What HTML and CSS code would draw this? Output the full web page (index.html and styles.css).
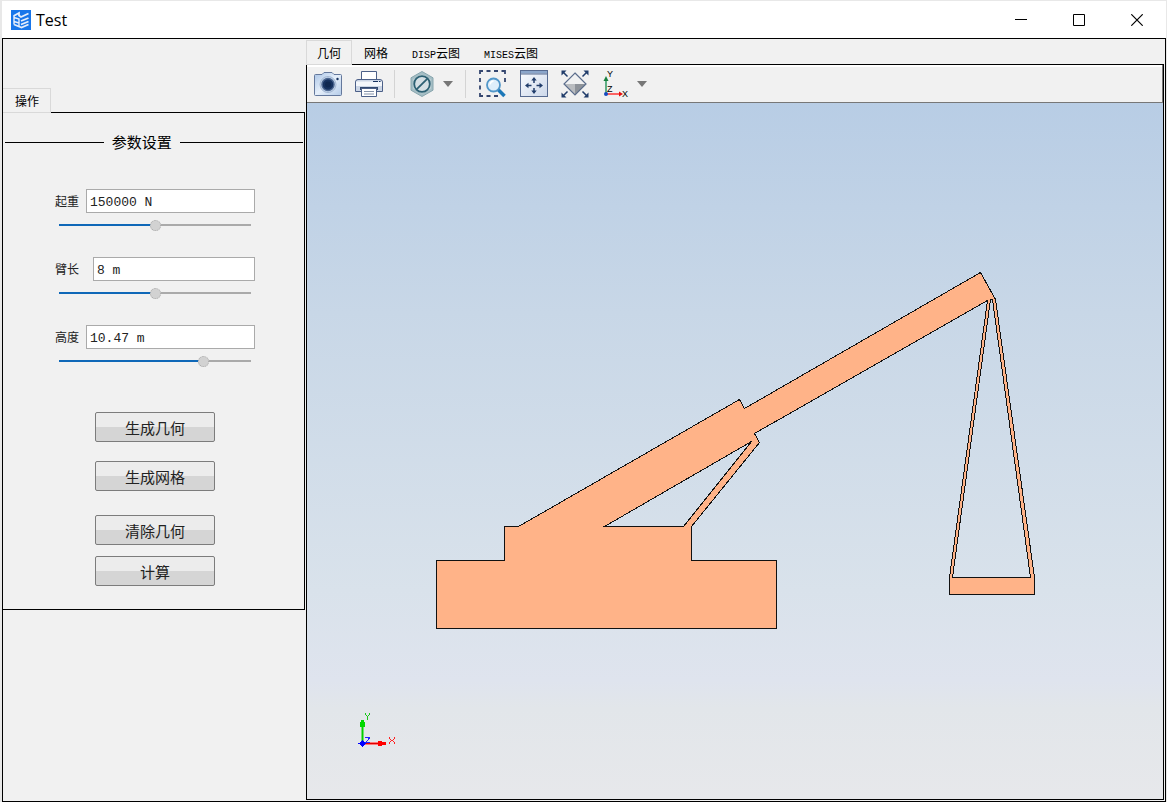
FILE: index.html
```
<!DOCTYPE html>
<html lang="zh-CN">
<head>
<meta charset="utf-8">
<title>Test</title>
<link rel="stylesheet" href="styles.css">
</head>
<body>
<div class="window">
  <header class="titlebar">
    <svg class="logo" width="20" height="20" viewBox="0 0 20 20" aria-hidden="true">
      <rect width="20" height="20" fill="#1876ea"/>
      <g fill="none" stroke="#e6eefb">
        <path d="M2.500 6 8 3v2.500L10 7l7.500-3.500M10 11l7.500-3M10 14.500l7.500-3M3 14.500l7.500 3 7-3" stroke-width="1.800"/>
        <path d="M3 6v8.500M3 7.500l5 1.500v7M3 11.500l5 1.500" stroke-width="1.400"/>
      </g>
    </svg>
    <h1 class="title">Test</h1>
    <button class="win-btn" aria-label="最小化"><svg width="12" height="12" viewBox="0 0 12 12"><path d="M0 5.500h12" fill="none" stroke="#000"/></svg></button>
    <button class="win-btn" aria-label="最大化"><svg width="12" height="12" viewBox="0 0 12 12"><path d="M.5.5h11v11H.5z" fill="none" stroke="#000"/></svg></button>
    <button class="win-btn" aria-label="关闭"><svg width="12" height="12" viewBox="0 0 12 12"><path d="M.3.3l11.400 11.400M11.700.3.3 11.700" fill="none" stroke="#000" stroke-width="1.200"/></svg></button>
  </header>

  <div class="content">
    <aside class="sidebar">
      <div class="tabs" role="tablist">
        <button class="tab tab-active" role="tab" aria-selected="true">操作</button>
        <span class="tab-line"></span>
      </div>
      <section class="panel">
        <h2 class="panel-title">参数设置</h2>
        <form class="params">
          <div class="param">
            <label for="load">起重</label>
            <input class="field" id="load" type="text" value="150000 N">
            <input class="slider half" type="range" min="0" max="100" value="50" aria-label="起重滑块">
          </div>
          <div class="param param-narrow">
            <label for="arm">臂长</label>
            <input class="field" id="arm" type="text" value="8 m">
            <input class="slider half" type="range" min="0" max="100" value="50" aria-label="臂长滑块">
          </div>
          <div class="param">
            <label for="height">高度</label>
            <input class="field" id="height" type="text" value="10.47 m">
            <input class="slider high" type="range" min="0" max="100" value="77" aria-label="高度滑块">
          </div>
        </form>
        <div class="actions">
          <button class="action">生成几何</button>
          <button class="action mesh">生成网格</button>
          <button class="action clear">清除几何</button>
          <button class="action compute">计算</button>
        </div>
      </section>
    </aside>

    <main class="main">
      <div class="tabs" role="tablist">
        <button class="tab tab-active" role="tab" aria-selected="true">几何</button>
        <button class="tab" role="tab">网格</button>
        <button class="tab" role="tab"><span class="latin">DISP</span>云图</button>
        <button class="tab" role="tab"><span class="latin">MISES</span>云图</button>
        <span class="tab-line"></span>
      </div>
      <div class="view">
        <div class="toolbar" role="toolbar">
          <button class="tool" aria-label="截图">
            <svg width="28" height="28" viewBox="0 0 28 28">
              <defs><linearGradient id="cam" x2="1" y2="1"><stop offset="0" stop-color="#a9c4e6"/><stop offset=".5" stop-color="#e6effa"/><stop offset="1" stop-color="#b4cbe8"/></linearGradient></defs>
              <path d="M1.500 4.500H8l2-2h8l2 2h6.500q1 0 1 1v19q0 1-1 1h-25q-1 0-1-1v-19q0-1 1-1z" fill="url(#cam)" stroke="#64789c"/>
              <circle cx="14" cy="14.500" r="8" fill="#c6d7ec" stroke="#a2b6d2"/>
              <circle cx="14" cy="14.500" r="6" fill="#16325f" stroke="#4d6790" stroke-width="1.500"/>
              <circle cx="14" cy="14.500" r="3" fill="#0f2850"/>
              <circle cx="23.500" cy="9" r="1.200" fill="#16325f"/>
            </svg>
          </button>
          <button class="tool" aria-label="打印">
            <svg width="28" height="28" viewBox="0 0 28 28">
              <path d="M6.500 10V1.500h15V10" fill="#fff" stroke="#4c6088"/>
              <path d="M3 9.500h22q2.500 0 2.500 2.500v9.500H.5V12Q.5 9.500 3 9.500z" fill="#ccd6e6" stroke="#4c6088"/>
              <path d="M1 11.500h26V16H1z" fill="#f4f7fb"/>
              <path d="M5 17h18v3H5z" fill="#32496f"/>
              <path d="M6.500 18.500h15v8h-15z" fill="#fff" stroke="#4c6088"/>
              <path d="M9 21.500h10M9 24h10" stroke="#8493aa"/>
              <path d="M18 11.500h5M24 11.500h1.500" stroke="#16325f" stroke-width="1.200"/>
            </svg>
          </button>
          <span class="divider"></span>
          <button class="tool" aria-label="隐藏">
            <svg width="28" height="28" viewBox="0 0 28 28">
              <path d="M14 1.500l11 6.300v12.400l-11 6.300-11-6.300V7.800z" fill="#a5bec5" stroke="#88a6ae"/>
              <path d="M14 4.500l9 5v9l-9 5-9-5v-9z" fill="#bdd1d6"/>
              <circle cx="14" cy="14" r="7.800" fill="#d4dfe4" stroke="#2b5f72" stroke-width="1.800"/>
              <path d="M8.800 19.200 19.200 8.800" stroke="#2b5f72" stroke-width="1.800"/>
            </svg>
          </button>
          <button class="drop" aria-label="隐藏选项"><svg width="12" height="6" viewBox="0 0 12 6"><path d="M1 0h10L6 6z" fill="#777"/></svg></button>
          <span class="divider"></span>
          <button class="tool" aria-label="框选缩放">
            <svg width="28" height="28" viewBox="0 0 28 28">
              <path d="M1 4V1h3M7.500 1h4M15 1h4M22.500 1H26v3M26 8v4M1 8v4M1 15.500v4M1 23v3h3M7.500 26h4M15 26h4" fill="none" stroke="#34466f" stroke-width="1.800"/>
              <circle cx="14.500" cy="15" r="6.500" fill="#dfeefa" stroke="#5297c9" stroke-width="1.800"/>
              <path d="M11 14.500q.5-3 3.500-3.500" fill="none" stroke="#fff" stroke-width="1.500"/>
              <path d="M19.500 20l6 6" stroke="#1c78b8" stroke-width="3.500"/>
            </svg>
          </button>
          <button class="tool" aria-label="适应窗口">
            <svg width="28" height="28" viewBox="0 0 28 28">
              <defs><linearGradient id="pane" x2="1" y2="1"><stop offset="0" stop-color="#fafcff"/><stop offset="1" stop-color="#cdd8ea"/></linearGradient></defs>
              <rect x=".5" y=".5" width="27" height="26" fill="url(#pane)" stroke="#566a90"/>
              <path d="M1 1h26v2.500H1z" fill="#8ba6cb"/><path d="M1 4h26" stroke="#566a90"/>
              <path d="M14 9v4M14 18v4M7.500 15.500h4M16.500 15.500h4" stroke="#213d6b" stroke-width="1.500"/>
              <path d="M14 7l2.700 3.500h-5.400zM14 24l2.700-3.500h-5.400zM5 15.500l3.500-2.700v5.400zM23 15.500l-3.500-2.700v5.400z" fill="#213d6b"/>
            </svg>
          </button>
          <button class="tool" aria-label="等轴视图">
            <svg width="28" height="28" viewBox="0 0 28 28">
              <path d="M14 3 25 14 14 25 3 14z" fill="#f0f1f2"/>
              <path d="M3 14h11v11z" fill="#b9bcc0"/><path d="M14 14h11L14 25z" fill="#8e939a"/>
              <path d="M14 3 25 14 14 25 3 14z" fill="none" stroke="#5b6d8c" stroke-width="1.200"/>
              <path d="M2 2l4.500 4.500M26 2l-4.500 4.500M2 26l4.500-4.500M26 26l-4.500-4.500" stroke="#213d6b" stroke-width="1.500"/>
              <path d="M.5.5h5l-5 5zM27.500.5v5l-5-5zM.5 27.500v-5l5 5zM27.500 27.500h-5l5-5z" fill="#213d6b"/>
            </svg>
          </button>
          <button class="tool" aria-label="坐标轴视图">
            <svg width="28" height="30" viewBox="0 0 28 30">
              <path d="M4 9v16" stroke="#4fa678" stroke-width="1.800"/><path d="M4 7l2.500 5h-5z" fill="#18813f"/>
              <path d="M4 25h14" stroke="#f33" stroke-width="1.500"/><path d="M21 25l-4-2.500v5z" fill="#e81010"/>
              <circle cx="4" cy="25" r="2" fill="#164bc0"/>
              <text class="axis-label" x="5" y="8">Y</text><text class="axis-label" x="5" y="23">Z</text><text class="axis-label" x="20" y="28">X</text>
            </svg>
          </button>
          <button class="drop" aria-label="视图选项"><svg width="12" height="6" viewBox="0 0 12 6"><path d="M1 0h10L6 6z" fill="#777"/></svg></button>
        </div>
        <div class="scene">
          <svg class="model" viewBox="307 103 856 696" preserveAspectRatio="xMidYMid meet" role="img" aria-label="起重机几何模型">
            <g class="crane" shape-rendering="crispEdges">
              <path fill-rule="evenodd" d="M436.500 560.500H504.500V526.500H518.500L739.500 399.500 744.500 408.500 980.500 272.500 995.500 299.500 1034.500 577.500V594.500H949.500V577.500L987.500 300.500 754.500 433.500 759.500 442.500 691.500 526.500V560.500H776.500V628.500H436.500zM604.500 526.500H683.500L751.500 441.500zM952.500 577.500H1030.500L992.500 299.500H990.500z"/>
            </g>
            <g shape-rendering="crispEdges">
              <path d="M362.500 743V727" stroke="#72dc72" stroke-width="3"/><path d="M362.500 743V727" stroke="#00cf00"/>
              <path d="M361 720h3v2h1v5h-5v-5h1z" fill="#00d800"/>
              <path d="M363 743.500h16" stroke="#f77" stroke-width="3"/><path d="M363 743.500h23" stroke="#e00000"/>
              <path d="M378 741h4v1h4v3h-4v1h-4z" fill="#f00"/>
              <path d="M362.500 740l4 3.500-4 3.500-4-3.500z" fill="#00f"/>
              <path d="M365 713h1v2h1v1h1v-1h1v-2h1v2h-1v1h-1v4h-1v-4h-1v-1h-1z" fill="#18c818"/>
              <path d="M365 737h5v1l-3 3v1h3v1h-5v-1l3-3v-1h-3z" fill="#22f"/>
              <path d="M389 737h1v2h1v1h2v-1h1v-2h1v2h-1v1h-1v1h1v1h1v2h-1v-2h-1v-1h-2v1h-1v2h-1v-2h1v-1h1v-1h-1v-1h-1z" fill="#f22"/>
            </g>
          </svg>
        </div>
      </div>
    </main>
  </div>
</div>
</body>
</html>
```
FILE: styles.css
```
* { box-sizing: border-box; }

body {
  margin: 0;
  background: #e8e8e8;
  color: #000;
  font: 12px/16px "Noto Sans CJK SC", sans-serif;
}

button, input { margin: 0; font: inherit; color: inherit; }
button { padding: 0; border: 0; background: none; }
svg { display: block; }

.window {
  display: flex;
  flex-direction: column;
  min-height: 100vh;
  padding: 1px 1px 0 2px;
}

.titlebar {
  display: flex;
  align-items: center;
  height: 37px;
  padding-left: 9px;
  background: #fff;
}

.title {
  flex: 1;
  margin: 0 0 0 5px;
  font: 400 16px/20px "Open Sans", sans-serif;
}

.win-btn {
  display: grid;
  place-items: center;
  width: 58px;
  height: 36px;
}

.content {
  flex: 1;
  display: grid;
  grid-template-columns: 303px minmax(0, 1fr);
  padding: 1px 1px 1px 0;
  border: 1px solid #000;
  background: #f1f1f1;
}

.tabs { display: flex; height: 25px; }

.tab {
  padding: 2px 12px 0;
  border-bottom: 1px solid #000;
  white-space: nowrap;
}

.tab-active {
  padding: 1px 10px 0;
  border: 1px solid #d9d9d9;
}

.tab-line { flex: 1; border-bottom: 1px solid #000; }
.latin { font: 10px "Liberation Mono", monospace; }

.sidebar { padding: 48px 1px 0 0; }
.sidebar .tab-active { padding: 1px 11px 0 12px; border-left: 0; }

.panel {
  padding: 19px 1px 23px 2px;
  border: solid #000;
  border-width: 0 1px 1px 0;
}

.panel-title {
  display: flex;
  align-items: center;
  gap: 8px;
  margin: 0;
  font-size: 15px;
  font-weight: 400;
  line-height: 20px;
}

.panel-title::before,
.panel-title::after {
  content: "";
  flex: 4;
  border-top: 1px solid #000;
}

.panel-title::after { flex: 5; }

.params {
  display: grid;
  gap: 20px;
  padding: 37px 48px 0 50px;
  color: #222;
}

.param {
  display: grid;
  grid-template-columns: 31px minmax(0, 1fr);
  align-items: center;
}

.param-narrow { grid-template-columns: 38px minmax(0, 1fr); }

.field {
  width: 100%;
  height: 24px;
  padding: 2px 3px 0;
  border: 1px solid #aaa;
  background: #fff;
  font: 13px "Liberation Mono", monospace;
}

.slider {
  grid-column: 1 / -1;
  height: 24px;
  margin: 0 4px;
  appearance: none;
  background: none;
}

.slider::-webkit-slider-runnable-track { height: 2px; background: #aaa; }
.half::-webkit-slider-runnable-track { background: linear-gradient(90deg, #0f68b8 50%, #aaa 50%); }
.high::-webkit-slider-runnable-track { background: linear-gradient(90deg, #0f68b8 75%, #aaa 75%); }

.slider::-webkit-slider-thumb {
  appearance: none;
  width: 11px;
  height: 11px;
  margin-top: -4px;
  border: 1px dotted #aaa;
  border-radius: 50%;
  background: #d2d2d2;
}

.actions {
  display: flex;
  flex-direction: column;
  align-items: center;
  padding: 39px 0 0 2px;
}

.action {
  width: 120px;
  height: 30px;
  padding-top: 1px;
  border: 1px solid #7c7c7c;
  border-radius: 2px;
  background: linear-gradient(#ececec 50%, #d5d5d5 50%);
  color: #222;
  font-size: 15px;
}

.mesh { margin-top: 19px; }
.clear { margin-top: 24px; }
.compute { margin-top: 11px; }

.main { display: flex; flex-direction: column; }

.view {
  flex: 1;
  display: flex;
  flex-direction: column;
  border: solid #000;
  border-width: 0 1px 1px;
}

.toolbar {
  display: flex;
  align-items: center;
  height: 38px;
  padding-left: 7px;
  border: solid #777;
  border-width: 0 1px 1px 0;
  box-shadow: inset 0 2px #fff;
}

.tool { margin-right: 13px; }
.tool:has(+ .drop) { margin-right: 6px; }
.tool:has(+ .divider) { margin-right: 11px; }

.divider {
  width: 1px;
  height: 28px;
  margin-right: 13px;
  background: #d4d4d4;
}

.drop { margin-right: 11px; }
.axis-label { font: 9px "Liberation Sans", sans-serif; }

.scene {
  flex: 1;
  display: flex;
  background: linear-gradient(#b8cde5, #c8d7e7 30%, #d9e2eb 70%, #dfe4ee 83%, #e2e6ea 87%, #e7e8eb);
}

.model { flex: 1; width: 100%; min-height: 0; }
.crane { fill: #ffb388; stroke: #111; stroke-width: 1px; }
```
